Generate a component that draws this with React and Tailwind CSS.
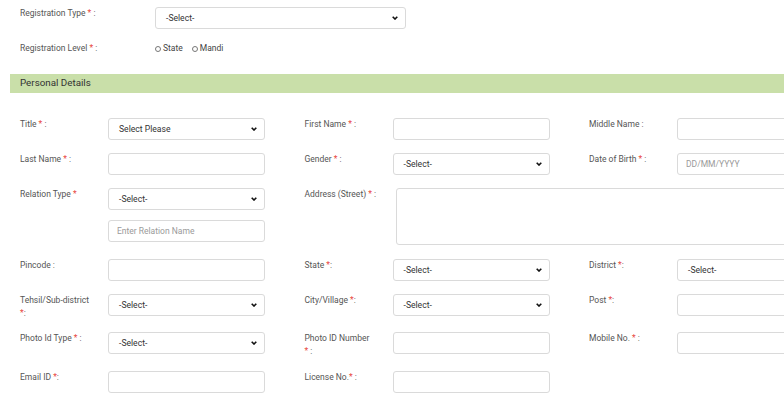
import React from "react";

const Star = () => <span className="text-[#e8463c]">*</span>;

const Chevron = () => (
  <svg width="6" height="4" viewBox="0 0 6 4" className="shrink-0">
    <path d="M0.7 0.7 L3 3 L5.3 0.7" fill="none" stroke="#111" strokeWidth="1.6" />
  </svg>
);

const Select = ({ text = "-Select-", w = "w-[157px]" }) => (
  <div className={`${w} h-[22px] border border-[#dadada] rounded-[3px] bg-white flex items-center justify-between pl-[10px] pr-[7px] text-[8.6px] text-[#333]`}>
    <span>{text}</span>
    <Chevron />
  </div>
);

const Input = ({ ph = "" }) => (
  <div className="w-[157px] h-[22px] border border-[#dadada] rounded-[3px] bg-white flex items-center pl-[8px] text-[8.5px] text-[#9a9a9a]">
    {ph}
  </div>
);

const Label = ({ children }) => (
  <div className="w-[88px] shrink-0 pr-[15px] leading-[13px] text-[8.5px] text-[#555]">{children}</div>
);

const Cell = ({ label, children }) => (
  <div className="flex w-[245px] shrink-0">
    <Label>{label}</Label>
    <div className="flex flex-col gap-[10px]">{children}</div>
  </div>
);

const Row = ({ h, children }) => (
  <div className={`flex gap-x-[39.5px] ${h} shrink-0`}>{children}</div>
);

const Radio = ({ label }) => (
  <span className="flex items-center gap-[2px]">
    <span className="w-[6px] h-[6px] rounded-full border border-[#777] bg-white" />
    <span>{label}</span>
  </span>
);

export default function App() {
  return (
    <div className="w-[784px] h-[407px] overflow-hidden bg-white font-['Roboto'] text-[#555]">
      <div className="pt-[7px] pl-[20px]">
        <div className="flex h-[34px]">
          <div className="w-[135px] leading-[13px] text-[8.5px]">
            Registration Type <Star /> :
          </div>
          <Select w="w-[251px]" />
        </div>
        <div className="flex h-[33px] items-start pt-[1px]">
          <div className="w-[135px] leading-[13px] text-[8.5px]">
            Registration Level <Star /> :
          </div>
          <div className="flex gap-[9px] leading-[13px] text-[8.5px] text-[#444]">
            <Radio label="State" />
            <Radio label="Mandi" />
          </div>
        </div>
      </div>

      <div className="ml-[10px] h-[19px] bg-[#c9dfa9] flex items-center pl-[10px] text-[9.8px] text-[#333]">
        Personal Details
      </div>

      <div className="pt-[25px] pl-[20px] flex flex-col">
        <Row h="h-[35px]">
          <Cell label={<>Title <Star /> :</>}>
            <Select text="Select Please" />
          </Cell>
          <Cell label={<>First Name <Star /> :</>}>
            <Input />
          </Cell>
          <Cell label={<>Middle Name :</>}>
            <Input />
          </Cell>
        </Row>
        <Row h="h-[35px]">
          <Cell label={<>Last Name <Star /> :</>}>
            <Input />
          </Cell>
          <Cell label={<>Gender <Star /> :</>}>
            <Select />
          </Cell>
          <Cell label={<>Date of Birth <Star /> :</>}>
            <Input ph="DD/MM/YYYY" />
          </Cell>
        </Row>
        <Row h="h-[71px]">
          <Cell label={<>Relation Type <Star /></>}>
            <Select />
            <Input ph="Enter Relation Name" />
          </Cell>
          <div className="flex">
            <div className="w-[91px] shrink-0 leading-[13px] text-[8.5px] text-[#555]">
              Address (Street) <Star /> :
            </div>
            <div className="w-[440px] h-[57px] border border-[#dadada] rounded-[3px]" />
          </div>
        </Row>
        <Row h="h-[35px]">
          <Cell label={<>Pincode :</>}>
            <Input />
          </Cell>
          <Cell label={<>State <Star />:</>}>
            <Select />
          </Cell>
          <Cell label={<>District <Star />:</>}>
            <Select />
          </Cell>
        </Row>
        <Row h="h-[38px]">
          <Cell label={<>Tehsil/Sub-district <Star />:</>}>
            <Select />
          </Cell>
          <Cell label={<>City/Village <Star />:</>}>
            <Select />
          </Cell>
          <Cell label={<>Post <Star />:</>}>
            <Input />
          </Cell>
        </Row>
        <Row h="h-[39px]">
          <Cell label={<>Photo Id Type <Star /> :</>}>
            <Select />
          </Cell>
          <Cell label={<>Photo ID Number <span className="whitespace-nowrap"><Star /> :</span></>}>
            <Input />
          </Cell>
          <Cell label={<>Mobile No. <Star /> :</>}>
            <Input />
          </Cell>
        </Row>
        <Row h="h-[35px]">
          <Cell label={<>Email ID <Star />:</>}>
            <Input />
          </Cell>
          <Cell label={<>License No.<Star /> :</>}>
            <Input />
          </Cell>
        </Row>
      </div>
    </div>
  );
}
